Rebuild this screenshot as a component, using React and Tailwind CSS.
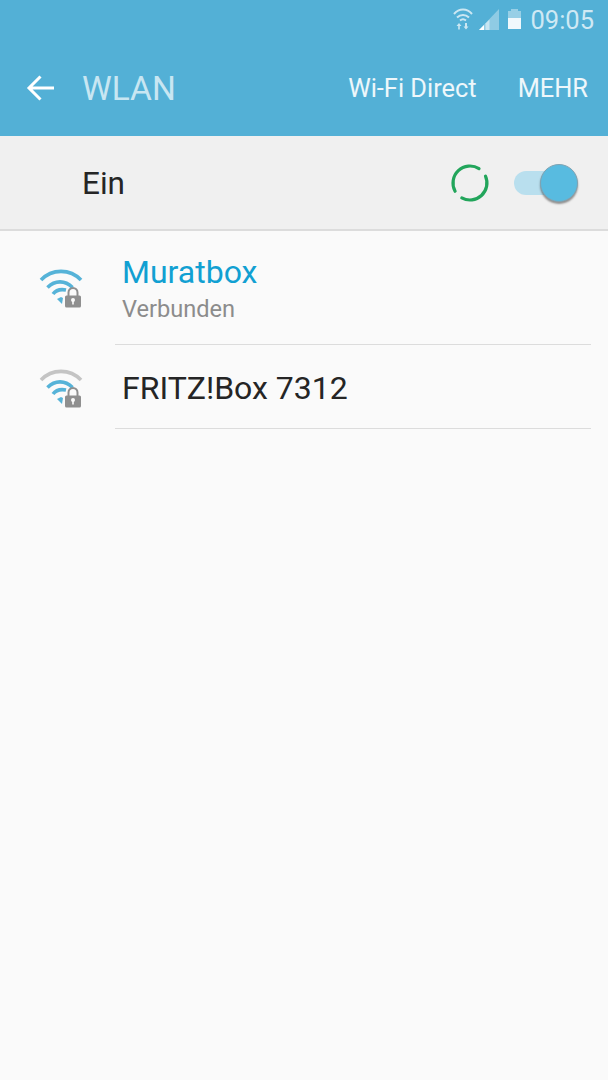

function WifiLock({ top = "#56b3d8" }) {
  return (
    <svg width="44" height="40" viewBox="0 0 44 40" className="block">
      <g fill="none" strokeWidth="3.6">
        <path d="M2 12 C13 0.5 31 0.5 42 12" stroke={top} />
        <path d="M8.5 19.5 C16 12 26 12 33.5 19.5" stroke="#56b3d8" />
        <path d="M14 26 C17 22 22 21 27 22" stroke="#56b3d8" />
      </g>
      <path d="M18 31 L22 29 L24 30 L23 36 Z" fill="#56b3d8" />
      <rect x="26" y="27.5" width="16" height="12" rx="1.5" fill="#8f8f8f" />
      <path d="M29.5 28 V24.5 a4.5 4.5 0 0 1 9 0 V28" fill="none" stroke="#8f8f8f" strokeWidth="2" />
      <circle cx="34" cy="32" r="2" fill="#fafafa" />
      <rect x="33.2" y="32" width="1.6" height="4.5" fill="#fafafa" />
    </svg>
  );
}

function Row({ children, divider, className, iconClass }) {
  return (
    <div className={`flex ${className}`}>
      <div className={`w-[115px] shrink-0 flex pl-[39px] items-center ${iconClass}`}>{divider}</div>
      <div className="flex-1 mr-[17px] border-b border-[#dcdcdc] flex flex-col">{children}</div>
    </div>
  );
}

export default function App() {
  return (
    <div className="w-[608px] h-[1080px] bg-[#fafafa] flex flex-col font-['Roboto',sans-serif] overflow-hidden">
      <div className="h-[136px] bg-[#53b0d6] flex flex-col shrink-0">
        <div className="h-[38px] flex items-center justify-end pr-[14px]">
          <svg width="20" height="24" viewBox="0 0 20 24" className="opacity-70 mr-[6px]">
            <g fill="none" stroke="#fff" strokeWidth="2">
              <path d="M1 7 C6 1 14 1 19 7" />
              <path d="M4 10.5 C7.5 7 12.5 7 16 10.5" />
              <path d="M7 13.5 C8.8 12 11.2 12 13 13.5" />
            </g>
            <path d="M6 16 L3.5 19 H5.2 V22.5 H6.8 V19 H8.5 Z M13 22.5 L15.5 19.5 H14 V16 H12 V19.5 H10.5 Z" fill="#fff" />
          </svg>
          <svg width="20" height="22" viewBox="0 0 20 22" className="mr-[8px]">
            <path d="M0 22 L20 1 V22 Z" fill="#fff" fillOpacity="0.35" />
            <path d="M0 22 L5 17 V22 Z" fill="#fff" />
            <path d="M6.5 22 V15.5 L10.5 11.5 V22 Z" fill="#fff" fillOpacity="0.5" />
          </svg>
          <svg width="15" height="22" viewBox="0 0 15 22" className="mr-[8px]">
            <path d="M4 1 H11 V3 H14 V21 H1 V3 H4 Z" fill="#fff" fillOpacity="0.4" />
            <rect x="1" y="10" width="13" height="11" fill="#fff" fillOpacity="0.85" />
          </svg>
          <span className="text-[25.5px] leading-none text-[#cfe9f4] pt-[4px]">09:05</span>
        </div>
        <div className="flex-1 flex items-center pt-[4px]">
          <div className="w-[82px] pl-[26px] shrink-0">
            <svg width="30" height="28" viewBox="0 0 30 28" className="block -mt-[2px]">
              <path d="M28 14 H3 M14.5 2.5 L3 14 L14.5 25.5" fill="none" stroke="#fff" strokeWidth="3" />
            </svg>
          </div>
          <span className="text-[33.5px] leading-none text-[#c8e6f2]">WLAN</span>
          <span className="ml-auto text-[25.4px] leading-none text-white/90">Wi-Fi Direct</span>
          <span className="ml-[41px] mr-[20px] text-[25.4px] leading-none text-white/90">MEHR</span>
        </div>
      </div>

      <div className="h-[95px] bg-[#f0f0f0] border-b-2 border-[#dcdcdc] flex items-center pl-[82px] pr-[30px] shrink-0">
        <span className="text-[31.5px] leading-none text-[#252525] pt-[3px]">Ein</span>
        <svg width="40" height="40" viewBox="0 0 40 40" className="ml-auto mr-[24px]">
          <g fill="none" stroke="#22a55b" strokeWidth="3.2" strokeLinecap="round">
            <path d="M35.5 13.1 A17 17 0 0 1 11.8 34.9" />
            <path d="M5.1 28.2 A17 17 0 0 1 29 5.6" />
          </g>
        </svg>
        <div className="relative w-[64px] h-[40px] flex items-center">
          <div className="w-[50px] h-[24px] rounded-full bg-[#b9dfee]" />
          <div className="absolute right-0 top-[1px] w-[38px] h-[38px] rounded-full bg-[#58bbe0] border border-[#7fa3b3] shadow-[0_2px_2px_rgba(0,0,0,0.4)]" />
        </div>
      </div>

      <Row className="h-[114px]" divider={<WifiLock />}>
        <span className="mt-[23px] ml-[7px] text-[32px] leading-[36px] text-[#11a0d2]">Muratbox</span>
        <span className="mt-[5px] ml-[7px] text-[23.6px] leading-[28px] text-[#8c8c8c]">Verbunden</span>
      </Row>
      <Row className="h-[84px]" iconClass="pt-[2px]" divider={<WifiLock top="#c4c4c4" />}>
        <span className="my-auto pt-[2px] ml-[7px] text-[32px] leading-none text-[#252525]">FRITZ!Box 7312</span>
      </Row>
    </div>
  );
}
